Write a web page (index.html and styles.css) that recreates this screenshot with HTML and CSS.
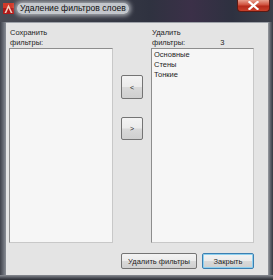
FILE: index.html
```html
<!DOCTYPE html>
<html>
<head>
<meta charset="utf-8">
<link rel="stylesheet" href="styles.css">
</head>
<body>
<div class="window">
  <div class="titlebar">
    <svg class="app-icon" width="11" height="11" viewBox="0 0 11 11">
      <rect x="0" y="0" width="11" height="11" fill="#b01818"/>
      <rect x="0" y="0" width="11" height="5" fill="#d23a2a"/>
      <path d="M1.5 10 L5.5 1.5 L9.5 10 L7.8 10 L5.5 5 L3.2 10 Z" fill="#f4d0c0"/>
    </svg>
    <span class="title">Удаление фильтров слоев</span>
    <div class="close">
      <svg width="11" height="9" viewBox="0 0 11 9">
        <path d="M1.5 1 L9.5 8 M9.5 1 L1.5 8" stroke="#fff" stroke-width="2.2" stroke-linecap="square"/>
      </svg>
    </div>
  </div>
  <div class="body">
    <div class="frame-left"></div>
    <div class="client">
      <div class="columns">
        <div class="col col-left">
          <div class="label">Сохранить<br>фильтры:</div>
          <div class="list"></div>
        </div>
        <div class="col col-mid">
          <button class="btn small first">&lt;</button>
          <button class="btn small second">&gt;</button>
        </div>
        <div class="col col-right">
          <div class="label label-row">
            <span>Удалить<br>фильтры:</span>
            <span class="count">3</span>
          </div>
          <div class="list">
            <div class="item">Основные</div>
            <div class="item">Стены</div>
            <div class="item">Тонкие</div>
          </div>
        </div>
      </div>
      <div class="actions">
        <button class="btn wide">Удалить фильтры</button>
        <button class="btn close-btn default">Закрыть</button>
      </div>
    </div>
    <div class="frame-right"></div>
  </div>
  <div class="frame-bottom"></div>
</div>
</body>
</html>
```
FILE: styles.css
```css
html, body {
  margin: 0;
  padding: 0;
  background: #2c2f36;
}
.window {
  width: 273px;
  height: 280px;
  display: flex;
  flex-direction: column;
  font-family: "Liberation Sans", Arial, sans-serif;
  font-size: 7.5px;
  color: #1e1e1e;
  overflow: hidden;
}
.titlebar {
  height: 22px;
  flex: none;
  position: relative;
  display: flex;
  align-items: flex-start;
  background: linear-gradient(90deg, #4a4c55 0%, #3a3d47 30%, #2f3240 55%, #3b3048 70%, #2e3140 85%, #3c404a 100%);
}
.app-icon {
  margin: 3px 0 0 3px;
  flex: none;
}
.title {
  margin: 3px 0 0 3px;
  font-size: 8.6px;
  line-height: 11px;
  color: #111;
  padding: 0 3px;
  background: rgba(235, 238, 242, 0.78);
  border-radius: 5px;
  box-shadow: 0 0 4px 2px rgba(235, 238, 242, 0.6);
}
.close {
  position: absolute;
  left: 237px;
  top: 0;
  width: 33px;
  height: 12px;
  border: 1px solid #5a1a14;
  border-top: none;
  border-radius: 0 0 4px 4px;
  box-sizing: border-box;
  background: linear-gradient(180deg, #e8a08e 0%, #d0503c 45%, #b52a1a 55%, #c8402a 100%);
  display: flex;
  align-items: center;
  justify-content: center;
}
.body {
  flex: 1;
  display: flex;
}
.frame-left {
  width: 6px;
  flex: none;
  background: linear-gradient(90deg, #3e414a 0%, #6a6e77 60%, #8a8e96 100%);
}
.frame-right {
  width: 5px;
  flex: none;
  background: linear-gradient(90deg, #9a9da3 0%, #5f636b 50%, #34373e 100%);
}
.frame-bottom {
  height: 5px;
  flex: none;
  background: linear-gradient(180deg, #8b8e95 0%, #4a4d55 60%, #2a2c32 100%);
}
.client {
  flex: 1;
  background: #e4e4e4;
  border-top: 1px solid #9da1a8;
  padding: 5px 14px 0 3px;
  display: flex;
  flex-direction: column;
}
.columns {
  display: flex;
  gap: 8px;
}
.col {
  display: flex;
  flex-direction: column;
}
.col-left {
  width: 104px;
}
.col-right {
  width: 103px;
}
.col-mid {
  width: 22px;
}
.label {
  height: 20px;
  line-height: 10px;
  padding-left: 1px;
}
.label-row {
  display: flex;
}
.count {
  margin-left: 35px;
  align-self: flex-end;
}
.list {
  height: 195px;
  box-sizing: border-box;
  background: #f6f6f6;
  border: 1px solid #8d8d8d;
  border-right-color: #c8c8c8;
  border-bottom-color: #c8c8c8;
  padding: 1px 2px;
  line-height: 10px;
}
.item {
  white-space: nowrap;
}
.btn {
  font-family: inherit;
  font-size: 7.5px;
  color: #1e1e1e;
  padding: 0;
  margin: 0;
  box-sizing: border-box;
  border: 1px solid #747474;
  border-radius: 2px;
  background: linear-gradient(180deg, #f3f3f3 0%, #ebebeb 48%, #d9d9d9 52%, #cfcfcf 100%);
}
.small {
  width: 22px;
  height: 24px;
  font-size: 7px;
}
.first {
  margin-top: 47px;
}
.second {
  margin-top: 18px;
  height: 23px;
}
.actions {
  display: flex;
  justify-content: flex-end;
  gap: 5px;
  margin-top: 10px;
}
.wide {
  width: 76px;
  height: 16px;
}
.close-btn {
  width: 52px;
  height: 16px;
}
.default {
  border-color: #3c7fb1;
  box-shadow: inset 0 0 0 1px #8ed0ef;
}
```
